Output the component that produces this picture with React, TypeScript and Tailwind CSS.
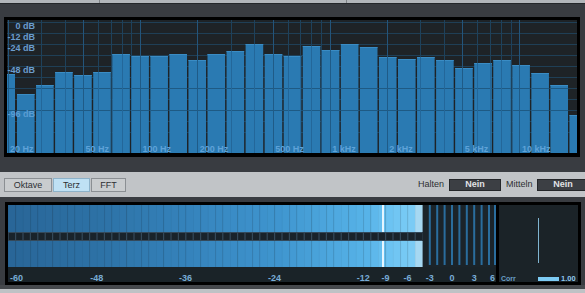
import React from "react";

const FONT = "'Liberation Sans', Arial, sans-serif";

// spectrum: third-octave band levels (top edge, page y)
const bandTops = [
  74, 94, 85, 72, 75, 72, 54, 56, 56, 54, 60, 54, 51, 44, 54, 56, 46, 50, 44,
  47, 57, 59, 57, 60, 68, 63, 60, 65, 73, 85, 115,
];

const freqX = (f: number) => 0.5 + 57.1 * Math.log2(f / 20);

const gridFreqs = [
  20, 30, 40, 50, 60, 70, 80, 90, 100, 200, 300, 400, 500, 600, 700, 800, 900,
  1000, 2000, 3000, 4000, 5000, 6000, 7000, 8000, 9000, 10000,
];
const majorFreqs = [20, 50, 100, 200, 500, 1000, 2000, 5000, 10000];

const freqLabels: Array<[number, string]> = [
  [20, "20 Hz"],
  [50, "50 Hz"],
  [100, "100 Hz"],
  [200, "200 Hz"],
  [500, "500 Hz"],
  [1000, "1 kHz"],
  [2000, "2 kHz"],
  [5000, "5 kHz"],
  [10000, "10 kHz"],
];

const dbLabels: Array<[string, number, boolean]> = [
  ["0 dB", 9, false],
  ["-12 dB", 19.5, false],
  ["-24 dB", 30.5, false],
  ["-48 dB", 52.5, false],
  ["-96 dB", 97, true],
];

function Spectrum() {
  const bars = bandTops.map((top, i) => ({
    x: i === 0 ? 0 : 10 + 19.05 * (i - 1),
    w: i === 0 ? 8 : 17.6,
    y: top - 20,
  }));

  return (
    <svg width={570} height={133} className="block">
      <defs>
        <clipPath id="barsClip">
          {bars.map((b, i) => (
            <rect key={i} x={b.x} y={b.y} width={b.w} height={133 - b.y} />
          ))}
        </clipPath>
      </defs>
      <rect width={570} height={133} fill="#1e2327" />
      {Array.from({ length: 11 }, (_, k) => (
        <rect key={k} x={0} y={2 + 11 * k} width={570} height={1} fill="#1f3f56" />
      ))}
      {gridFreqs.map((f) => (
        <rect
          key={f}
          x={Math.round(freqX(f))}
          y={0}
          width={1}
          height={133}
          fill={majorFreqs.includes(f) ? "#23547a" : "#1e415b"}
        />
      ))}
      {bars.map((b, i) => (
        <g key={i}>
          <rect x={b.x} y={b.y} width={b.w} height={133 - b.y} fill="#2a7ab2" />
          <rect x={b.x} y={b.y} width={b.w} height={1} fill="#3a8cc4" />
        </g>
      ))}
      <g clipPath="url(#barsClip)">
        <rect x={0} y={68} width={570} height={1} fill="#1e5a84" />
        <rect x={0} y={90} width={570} height={1} fill="#1e5a84" />
        {gridFreqs.map((f) => (
          <rect
            key={f}
            x={Math.round(freqX(f))}
            y={0}
            width={1}
            height={133}
            fill={majorFreqs.includes(f) ? "#1f5b87" : "#23679a"}
          />
        ))}
      </g>
      {dbLabels.map(([t, y, onBar]) => (
        <text
          key={t}
          x={28}
          y={y}
          textAnchor="end"
          fontFamily={FONT}
          fontWeight="bold"
          fontSize={9}
          fill={onBar ? "#5a9dd2" : "#6b9dcd"}
        >
          {t}
        </text>
      ))}
      {freqLabels.map(([f, t]) => (
        <text
          key={t}
          x={freqX(f) + 2.5}
          y={131.5}
          fontFamily={FONT}
          fontWeight="bold"
          fontSize={9}
          fill="#5ea2d8"
        >
          {t}
        </text>
      ))}
    </svg>
  );
}

// level meter
const mx = (db: number) => 444 + 7.4 * db;

const stops: Array<[number, number[]]> = [
  [-60, [0x29, 0x66, 0x98]],
  [-48, [0x2d, 0x72, 0xa6]],
  [-36, [0x35, 0x83, 0xbc]],
  [-24, [0x3f, 0x95, 0xcf]],
  [-12, [0x57, 0xb3, 0xe8]],
  [-9, [0x6c, 0xc3, 0xf2]],
  [-5, [0x80, 0xce, 0xf6]],
];

function segColor(db: number) {
  if (db >= -5) return "#a6d8f2";
  for (let i = 0; i < stops.length - 1; i++) {
    const [a, ca] = stops[i];
    const [b, cb] = stops[i + 1];
    if (db >= a && db <= b) {
      const t = (db - a) / (b - a);
      const c = ca.map((v, k) => Math.round(v + (cb[k] - v) * t));
      return `rgb(${c[0]},${c[1]},${c[2]})`;
    }
  }
  return "#80cef6";
}

const meterLabels = [-60, -48, -36, -24, -12, -9, -6, -3, 0, 3, 6];

function Meter() {
  const segs = Array.from({ length: 56 }, (_, i) => -60 + i);
  const fillEnd = mx(-4);
  return (
    <svg width={488} height={77} className="block shrink-0">
      <rect width={488} height={62} fill="#1b242a" />
      {segs.map((d) => (
        <g key={d}>
          <rect x={mx(d)} y={0} width={7.6} height={27} fill={segColor(d)} />
          <rect x={mx(d)} y={36} width={7.6} height={26} fill={segColor(d)} />
          <rect x={mx(d)} y={0} width={1} height={27} fill="rgba(0,0,0,0.04)" />
          <rect x={mx(d)} y={36} width={1} height={26} fill="rgba(0,0,0,0.04)" />
        </g>
      ))}
      <rect x={0} y={27} width={fillEnd} height={9} fill="#34495a" />
      {segs.map((d) => (
        <rect key={d} x={mx(d) + 0.8} y={28} width={6.2} height={7} fill="#19232b" />
      ))}
      <rect x={374} y={0} width={2} height={27} fill="#e6f6ff" />
      <rect x={374} y={36} width={2} height={26} fill="#e6f6ff" />
      {[-3, -2, -1, 0, 1, 2, 3, 4, 5, 6].map((d) => (
        <rect
          key={d}
          x={Math.min(mx(d) - 1, 486)}
          y={0}
          width={2}
          height={60}
          fill="#2a6d9d"
        />
      ))}
      <rect x={0} y={62} width={488} height={15} fill="#1a2328" />
      {meterLabels.map((d) => (
        <text
          key={d}
          x={d === -60 ? 2 : d === 6 ? 487 : mx(d)}
          y={76}
          textAnchor={d === -60 ? "start" : d === 6 ? "end" : "middle"}
          fontFamily={FONT}
          fontWeight="bold"
          fontSize={9}
          fill="#78acd6"
        >
          {d}
        </text>
      ))}
    </svg>
  );
}

function Corr() {
  return (
    <svg width={79} height={77} className="block shrink-0">
      <rect width={79} height={77} fill="#1b2328" />
      <rect x={39} y={13} width={1} height={45} fill="#7fb4d0" />
      <text x={2} y={76} fontFamily={FONT} fontWeight="bold" fontSize={7} fill="#6a9ec6">
        Corr
      </text>
      <rect x={39} y={72} width={21} height={4} fill="#7dcbf4" />
      <text x={62} y={76} fontFamily={FONT} fontWeight="bold" fontSize={7.5} fill="#8fc8ee">
        1.00
      </text>
    </svg>
  );
}

export default function App() {
  return (
    <div className="w-[585px] h-[293px] overflow-hidden bg-[#393c41] flex flex-col font-['Liberation_Sans',Arial,sans-serif]">
      <div className="h-[3px] shrink-0 flex bg-[#b2b6ba]">
        <div className="w-[100px] border-r border-[#7e8286]" />
        <div className="w-[247px] border-r border-[#7e8286]" />
      </div>
      <div className="h-px shrink-0 bg-[#24272a]" />

      <div className="pt-[13px] pl-[4px] pr-[5px] shrink-0">
        <div className="h-[140px] border-[3px] border-b-4 border-black bg-[#1e2327]">
          <Spectrum />
        </div>
      </div>

      <div className="h-[15px] shrink-0" />

      <div className="h-[25px] shrink-0 bg-[#c1c4c7] flex items-center pl-[4px] text-[9px] text-[#2d2f32]">
        <div className="flex gap-px">
          <button className="w-[48px] h-[14px] border border-[#8b8f93] bg-[#c9ccce] leading-[12px]">
            Oktave
          </button>
          <button className="w-[37px] h-[14px] border border-[#8db2c9] bg-[#bfe1f4] leading-[12px]">
            Terz
          </button>
          <button className="w-[35px] h-[14px] border border-[#8b8f93] bg-[#c9ccce] leading-[12px]">
            FFT
          </button>
        </div>
        <div className="ml-auto mr-[-4px] flex items-center">
          <span className="w-[26px] mr-[5px]">Halten</span>
          <div className="w-[52px] h-[12px] bg-[#3c3f44] border border-[#25272a] text-[#e1e3e6] font-bold flex items-center justify-center leading-none">
            Nein
          </div>
          <span className="w-[26px] ml-[5px] mr-[5px]">Mitteln</span>
          <div className="w-[52px] h-[12px] bg-[#3c3f44] border border-[#25272a] text-[#e1e3e6] font-bold flex items-center justify-center leading-none">
            Nein
          </div>
        </div>
      </div>

      <div className="h-[5px] shrink-0" />

      <div className="pl-[5px] pr-[4px] shrink-0">
        <div className="h-[83px] border-[3px] border-black bg-black flex gap-[3px]">
          <Meter />
          <Corr />
        </div>
      </div>

      <div className="h-[4px] shrink-0 bg-[#45484c]" />
      <div className="h-[4px] shrink-0 bg-[#bfc2c5]" />
    </div>
  );
}
